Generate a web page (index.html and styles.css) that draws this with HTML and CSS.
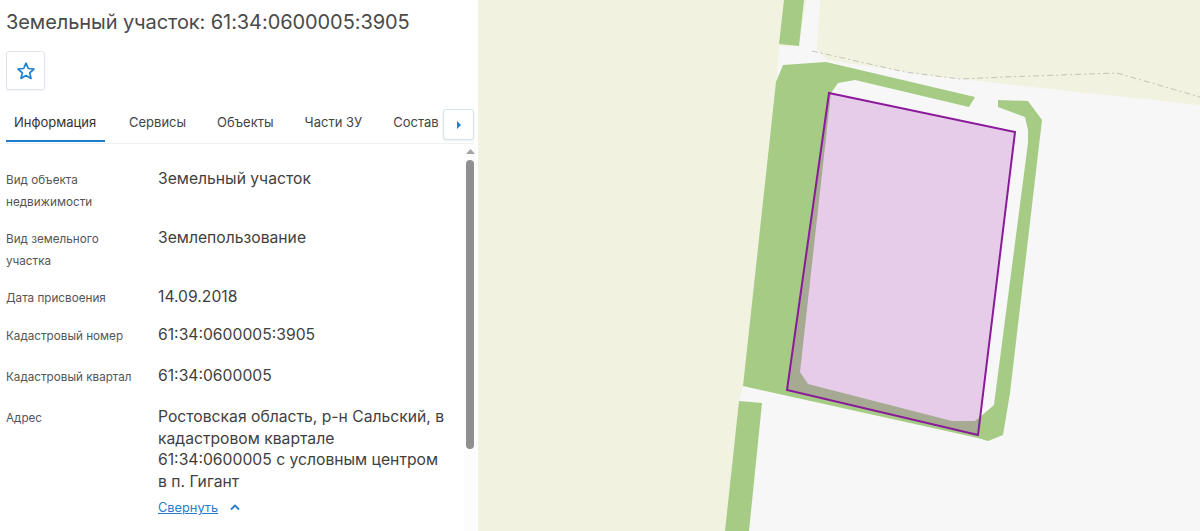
FILE: index.html
```html
<!DOCTYPE html>
<html lang="ru">
<head>
<meta charset="utf-8">
<title>Земельный участок</title>
<link rel="stylesheet" href="styles.css">
</head>
<body>
<div class="app">
  <aside class="panel">
    <h1 class="title">Земельный участок: 61:34:0600005:3905</h1>
    <button class="star-btn" aria-label="Избранное">
      <svg width="20" height="20" viewBox="0 0 20 20"><path d="M10 2.2l2.3 5.3 5.7.5-4.3 3.8 1.3 5.6L10 14.5l-5 2.9 1.3-5.6L2 8l5.7-.5z" fill="none" stroke="#1f7fd0" stroke-width="1.7" stroke-linejoin="round"/></svg>
    </button>
    <nav class="tabs">
      <a class="tab tab-active">Информация</a>
      <a class="tab">Сервисы</a>
      <a class="tab">Объекты</a>
      <a class="tab">Части ЗУ</a>
      <a class="tab">Состав</a>
      <button class="tab-next" aria-label="Далее">
        <svg width="6" height="8" viewBox="0 0 6 8"><path d="M1 0l4 4-4 4z" fill="#1f7fd0"/></svg>
      </button>
    </nav>
    <div class="body">
      <div class="info">
        <div class="row row-a"><div class="label">Вид объекта недвижимости</div><div class="value">Земельный участок</div></div>
        <div class="row row-a"><div class="label">Вид земельного участка</div><div class="value">Землепользование</div></div>
        <div class="row row-b"><div class="label">Дата присвоения</div><div class="value">14.09.2018</div></div>
        <div class="row row-c"><div class="label">Кадастровый номер</div><div class="value">61:34:0600005:3905</div></div>
        <div class="row row-c"><div class="label">Кадастровый квартал</div><div class="value">61:34:0600005</div></div>
        <div class="row">
          <div class="label">Адрес</div>
          <div class="value">Ростовская область, р-н Сальский, в кадастровом квартале 61:34:0600005 с условным центром в п. Гигант
            <div class="collapse"><a class="link">Свернуть</a>
              <svg width="10" height="7" viewBox="0 0 10 7"><path d="M1 5.5l4-4 4 4" fill="none" stroke="#2a7cc7" stroke-width="1.8"/></svg>
            </div>
          </div>
        </div>
      </div>
      <div class="scrollbar">
        <svg class="scroll-up" width="9" height="5" viewBox="0 0 9 5"><path d="M4.5 0L9 5H0z" fill="#a3a3a3"/></svg>
        <div class="thumb"></div>
      </div>
    </div>
  </aside>
  <main class="map">
    <svg class="map-svg" viewBox="478 0 722 531" width="722" height="531">
      <rect class="ground" x="478" y="0" width="722" height="531"/>
      <path class="field" d="M478 0H806L799 46 779 46 777 80 743 386 739 401 725 531H478Z"/>
      <path class="field" d="M820 0H1200V105L987 82 927 75 827 60 817 50Z"/>
      <path class="green" d="M784 0H804L799 46 779 44Z"/>
      <path class="green" d="M739 401L762 403 749 531H725Z"/>
      <path class="green" d="M783 65L826 62 975 97 969 107 855 80 838 83 831 93 800 372 808 384 952 421 975 421 980 417 994 405 995 397 1028 143 1028 130 1025 117 998 107 998 100 1028 101 1042 120 1010 393 1003 435 988 441 978 438 743 386 776 82Z"/>
      <path class="trail" d="M812 51L905 72 960 79 1005 77 1117 73 1200 97"/>
      <path class="parcel" d="M829 93L1015 132 978 435 787 390Z"/>
    </svg>
  </main>
</div>
</body>
</html>
```
FILE: styles.css
```css
* { box-sizing: border-box; }
html, body { margin: 0; height: 100%; overflow: hidden; background: #fff; }
body { font-family: Inter, "Noto Sans", sans-serif; color: #3c3c3c; }
.app { display: flex; width: 1200px; height: 531px; overflow: hidden; }
.panel { width: 478px; flex: none; height: 531px; display: flex; flex-direction: column; background: #fff; overflow: hidden; }
.title { margin: 0; padding: 9px 0 0 6px; font-size: 20px; line-height: 26px; font-weight: 400; color: #4a4a4a; letter-spacing: -.08px; }
.star-btn { margin: 16px 0 0 6px; width: 39px; height: 39px; padding: 0; display: flex; align-items: center; justify-content: center; background: #fff; border: 1px solid #dfe5ec; border-radius: 3px; box-shadow: 0 1px 2px rgba(0,0,0,.05); }
.tabs { position: relative; display: flex; margin: 19px 4px 0 6px; height: 35px; border-bottom: 1px solid #eef0f2; }
.tab { display: block; height: 33px; padding: 4px 8px 0; font-size: 13px; line-height: 18px; color: #444; margin-right: 15px; white-space: nowrap; }
.tab-active { color: #333; border-bottom: 2px solid #1f7cc9; width: 99px; margin-right: 16px; }
.tab-next { position: absolute; right: 0; top: 0; width: 31px; height: 31px; padding: 0; display: flex; align-items: center; justify-content: center; background: #fff; border: 1px solid #d5e1ec; border-radius: 3px; box-shadow: 0 1px 2px rgba(0,0,0,.08); }
.body { flex: 1; display: flex; min-height: 0; }
.info { flex: 1; padding: 24px 18px 0 6px; min-width: 0; }
.row { display: flex; margin-bottom: 14px; }
.row-b { margin-bottom: 15px; }
.row-c { margin-bottom: 18px; }
.label { width: 152px; flex: none; padding: 1px 20px 0 0; font-size: 11.7px; line-height: 22px; color: #555; }
.value { flex: 1; font-size: 15.7px; line-height: 21.7px; color: #3f3f3f; }
.collapse { display: flex; align-items: center; gap: 12px; margin-top: 5px; }
.link { font-size: 12.8px; line-height: 20px; color: #2a7cc7; text-decoration: underline; }
.scrollbar { width: 12px; flex: none; margin-right: 2px; display: flex; flex-direction: column; align-items: center; background: #fcfcfc; padding-top: 5px; }
.scroll-up { flex: none; }
.thumb { width: 8px; height: 289px; margin-top: 6px; border-radius: 4px; background: #8f8f8f; }
.map { flex: 1; height: 531px; overflow: hidden; }
.map-svg { display: block; }
.ground { fill: #f7f7f7; }
.field { fill: #f1f2e0; }
.green { fill: #a5cb85; }
.trail { fill: none; stroke: #c6c4bb; stroke-width: 1; stroke-dasharray: 6 3 2 3; }
.parcel { fill: rgba(175,67,187,.24); stroke: #8a1a9a; stroke-width: 2; }
```
